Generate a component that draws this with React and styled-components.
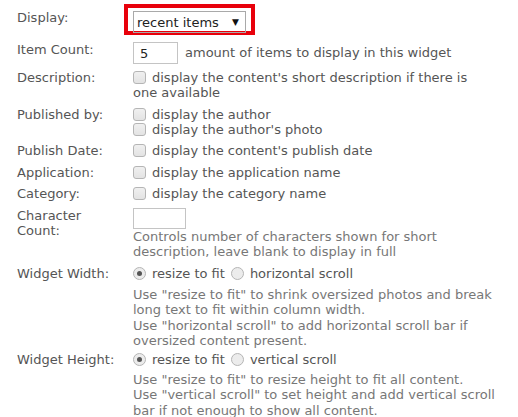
import styled, { createGlobalStyle } from 'styled-components'

const GlobalStyle = createGlobalStyle`
    body {
        margin: 0;
        background: #fff;
        font-family: "DejaVu Sans", Verdana, sans-serif;
        font-size: 13px;
        color: #555;
    }
`

const Form = styled.div`
    display: grid;
    grid-template-columns: 116px 372px;
    row-gap: 6.5px;
    padding: 4px 0 0 17px;
    line-height: 15px;
`

const Label = styled.div`
    padding-top: ${({ top }) => top || 0}px;
    margin-top: ${({ shift }) => shift || 0}px;
    white-space: ${({ wrap }) => (wrap ? 'normal' : 'nowrap')};
    width: ${({ wrap }) => (wrap ? '80px' : 'auto')};
`

const Field = styled.div`
    display: flex;
    flex-direction: column;
    align-items: flex-start;
    margin-top: ${({ shift }) => shift || 0}px;
`

const Highlight = styled.div`
    border: 4px solid #e8000b;
    padding: 3px 5px 0 5px;
    margin-left: -9px;
    height: 20px;
`

const Select = styled.div`
    box-sizing: border-box;
    width: 113px;
    height: 22px;
    border: 1px solid #a9a9a9;
    display: flex;
    align-items: center;
    justify-content: space-between;
    padding: 0 6px 0 3px;
    color: #222;
`

const Arrow = styled.span`
    font-size: 9px;
    color: #111;
`

const InlineRow = styled.div`
    display: flex;
    align-items: center;
    gap: 7px;
`

const TextBox = styled.div`
    box-sizing: border-box;
    width: ${({ w }) => w}px;
    height: ${({ h }) => h || 22}px;
    border: 1px solid #c4c4c4;
    padding: 3px 0 0 6px;
    color: #222;
`

const Check = styled.span`
    display: inline-block;
    box-sizing: border-box;
    width: 13px;
    height: 13px;
    border: 1px solid #b5b5b5;
    border-radius: 3px;
    background: linear-gradient(#f0f0f0, #e3e3e3);
    vertical-align: -2px;
    margin-right: 6px;
`

const Radio = styled.span`
    display: inline-block;
    box-sizing: border-box;
    width: 13px;
    height: 13px;
    border: 1px solid #b5b5b5;
    border-radius: 50%;
    background: #ececec;
    vertical-align: -2px;
    margin-right: 6px;
    position: relative;

    ${({ checked }) => checked && `
        &::after {
            content: '';
            position: absolute;
            left: 3px;
            top: 3px;
            width: 5px;
            height: 5px;
            border-radius: 50%;
            background: #555;
        }
    `}
`

const RadioGroup = styled.div`
    display: flex;
    gap: 6px;
`

const Wrapped = styled.div`
    width: 360px;
`

const Help = styled.div`
    color: #777;
    line-height: 15.4px;
    margin-top: ${({ gap }) => gap || 0}px;
`

function CheckOption({ children }) {
    return (
        <div>
            <Check />
            {children}
        </div>
    )
}

function App() {
    return (
        <>
            <GlobalStyle />
            <Form>
                <Label top={6}>Display:</Label>
                <Field>
                    <Highlight>
                        <Select>
                            recent items <Arrow>▼</Arrow>
                        </Select>
                    </Highlight>
                </Field>

                <Label>Item Count:</Label>
                <Field>
                    <InlineRow>
                        <TextBox w={45}>5</TextBox>
                        amount of items to display in this widget
                    </InlineRow>
                </Field>

                <Label>Description:</Label>
                <Field>
                    <Wrapped>
                        <Check />display the content's short description if there is one available
                    </Wrapped>
                </Field>

                <Label>Published by:</Label>
                <Field>
                    <CheckOption>display the author</CheckOption>
                    <CheckOption>display the author's photo</CheckOption>
                </Field>

                <Label>Publish Date:</Label>
                <Field>
                    <CheckOption>display the content's publish date</CheckOption>
                </Field>

                <Label>Application:</Label>
                <Field>
                    <CheckOption>display the application name</CheckOption>
                </Field>

                <Label>Category:</Label>
                <Field>
                    <CheckOption>display the category name</CheckOption>
                </Field>

                <Label wrap>Character Count:</Label>
                <Field>
                    <TextBox w={53} h={21} />
                    <Wrapped>
                        <Help>
                            Controls number of characters shown for short description, leave blank to display in full
                        </Help>
                    </Wrapped>
                </Field>

                <Label>Widget Width:</Label>
                <Field>
                    <RadioGroup>
                        <span><Radio checked />resize to fit</span>
                        <span><Radio />horizontal scroll</span>
                    </RadioGroup>
                    <Help gap={6}>
                        Use "resize to fit" to shrink oversized photos and break long text to fit within column width.
                        <br />
                        Use "horizontal scroll" to add horizontal scroll bar if oversized content present.
                    </Help>
                </Field>

                <Label shift={-3}>Widget Height:</Label>
                <Field shift={-3}>
                    <RadioGroup>
                        <span><Radio checked />resize to fit</span>
                        <span><Radio />vertical scroll</span>
                    </RadioGroup>
                    <Help gap={5}>
                        Use "resize to fit" to resize height to fit all content.
                        <br />
                        Use "vertical scroll" to set height and add vertical scroll bar if not enough to show all content.
                    </Help>
                </Field>
            </Form>
        </>
    )
}

export default App
